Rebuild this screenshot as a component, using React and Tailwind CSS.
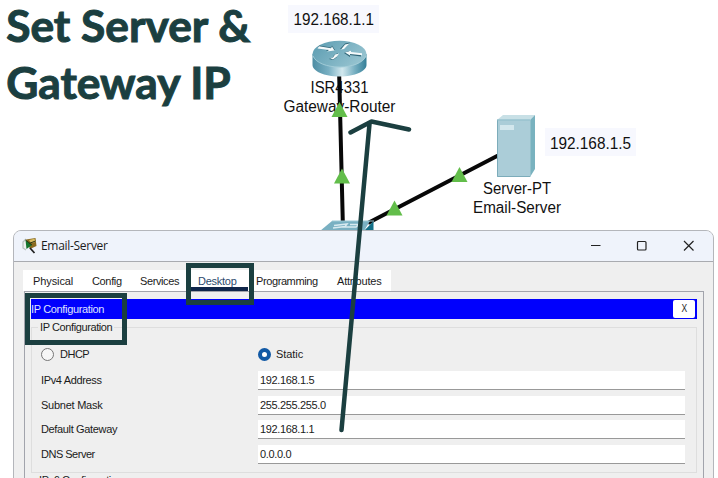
const tabs = [
  { name: 'Physical', cls: 'w-[59px] pl-[10px] tracking-[-0.1px]' },
  { name: 'Config', cls: 'w-[48px] pl-[10px] tracking-[-0.35px]' },
  { name: 'Services', cls: 'w-[58px] pl-[10px] tracking-[-0.4px]' },
  { name: 'Desktop', cls: 'w-[58px] pl-[10px] tracking-[-0.25px] text-[#2b4a6d]', active: true },
  { name: 'Programming', cls: 'w-[81px] pl-[10px] tracking-[-0.4px]' },
  { name: 'Attributes', cls: 'w-[64px] pl-[10px] tracking-[-0.2px]' },
];

const fields = [
  { label: 'IPv4 Address', labelCls: 'tracking-[-0.35px]', value: '192.168.1.5' },
  { label: 'Subnet Mask', labelCls: 'tracking-[-0.25px]', value: '255.255.255.0' },
  { label: 'Default Gateway', labelCls: 'tracking-[-0.35px]', value: '192.168.1.1' },
  { label: 'DNS Server', labelCls: 'tracking-[-0.5px]', value: '0.0.0.0' },
];

const linkLights = [
  [339.5, 102],
  [342, 168.5],
  [394.5, 200.5],
  [459.5, 167],
];

function CanvasText({ x, y, width, children }) {
  return (
    <text x={x} y={y} textLength={width} lengthAdjust="spacingAndGlyphs" fontSize="16" fill="#111">
      {children}
    </text>
  );
}

function Topology() {
  return (
    <svg className="absolute left-0 top-0 h-[230px] w-[718px] font-['Liberation_Sans',Arial,sans-serif]" viewBox="0 0 718 230">
      <defs>
        <linearGradient id="routerSide">
          <stop offset="0" stopColor="#4d8da3" />
          <stop offset="0.3" stopColor="#79b0c3" />
          <stop offset="0.55" stopColor="#d2e8ee" />
          <stop offset="0.78" stopColor="#78b0c2" />
          <stop offset="1" stopColor="#347f98" />
        </linearGradient>
        <linearGradient id="routerTop" x2="1" y2="0.5">
          <stop offset="0" stopColor="#5a9bb0" />
          <stop offset="1" stopColor="#94c2cf" />
        </linearGradient>
      </defs>
      <rect x="288" y="5" width="91" height="28" fill="#f7f8fe" />
      <CanvasText x={293.5} y={25} width={80.5}>192.168.1.1</CanvasText>
      <rect x="545" y="128" width="91" height="28" fill="#f7f8fe" />
      <CanvasText x={550} y={149} width={81}>192.168.1.5</CanvasText>

      <CanvasText x={310.5} y={93} width={58}>ISR4331</CanvasText>
      <CanvasText x={283.5} y={112} width={112}>Gateway-Router</CanvasText>
      <CanvasText x={483} y={194} width={68}>Server-PT</CanvasText>
      <CanvasText x={473} y={213} width={88}>Email-Server</CanvasText>

      <path d="M339.2 76L342.8 222M368 223L499 155" stroke="#080808" strokeWidth="4" fill="none" />

      <path d="M312.5 54V65C312.5 71 324 76.5 339.5 76.5S366.500 71 366.500 65V54Z" fill="url(#routerSide)" />
      <ellipse cx="339.500" cy="54" rx="27" ry="13.200" fill="url(#routerTop)" />
      <path d="M313 56C316 63 327 67 339.500 67S363 63 366 56" fill="none" stroke="#a9d0da" strokeWidth="0.8" />
      <g fill="#2f6577">
        <path d="M319 45.500L331 47.500L332 45.500L335 50L326 51L328 49L318 47.500Z" />
        <path d="M340 49L345 43.500L350 42.500L347 46L343 49Z" />
        <path d="M361 54.500L349 53L349 51L344 53L350 57L350 55L361 56.500Z" />
        <path d="M329 59L333 57L334 55L338 53L337 57L333 60Z" />
      </g>
      <g fill="#f5fafb">
        <path d="M319 46.200L331 48.200L332 46.500L334.500 50.500L327 51.500L329 50L317.500 48.500Z" />
        <path d="M341 49.500L345 44.500L349.500 43.500L347 46L344 49Z" />
        <path d="M362 53.200L351 52L351 50.700L345 52.500L350 55.500L350 54L362 55.200Z" />
        <path d="M330 58L333 57.500L335 54.500L339 53.500L337 56.500L333 59.500Z" />
      </g>

      <path d="M497 120L503 115H535L530 120Z" fill="#c8e0e6" />
      <path d="M530 120L535 115V169L530 177Z" fill="#79b2bf" />
      <rect x="497" y="119.500" width="33.500" height="57.500" fill="#abcdd8" />
      <path d="M497.500 120V176.500H530" fill="none" stroke="#7cacba" />
      <path d="M497 120H530" stroke="#8fbdca" />
      <rect x="500" y="125" width="14" height="5" fill="#d3e7ed" />

      <path d="M320 231L332 221H370L364 231Z" fill="#79b0c2" />
      <path d="M364 231L373.500 221V231Z" fill="#137088" />
      <path d="M332 221H374" stroke="#9dc9d5" />
      <path d="M334 225.500L347 224L345 226.500L333 228M350 224.500H359L356 227H343" fill="none" stroke="#d8eaf0" strokeWidth="1.500" />

      {linkLights.map(([x, y]) => (
        <path key={x} d={`M${x} ${y}l8 15h-16z`} fill="#62bd4a" />
      ))}
    </svg>
  );
}

function AppIcon() {
  return (
    <svg className="h-[18px] w-[18px]" viewBox="0 0 18 18">
      <path d="M5 2L2 5v6l3 2" fill="#eef0ef" stroke="#b9c2c0" strokeWidth="1.300" />
      <path d="M5 2.500L14.500 1L15.500 9L9 12Z" fill="#8a6b21" />
      <path d="M8 3L13.500 1.800L14.500 5L10 6Z" fill="#d9bd62" />
      <path d="M4.500 3L11 8L5.500 12Z" fill="#14752c" />
      <path d="M4.500 3L11 8M8 6.500L14.500 4" stroke="#2d3714" strokeWidth="1" />
      <path d="M9 11L13.500 16" stroke="#222" strokeWidth="1.800" />
    </svg>
  );
}

function TitleBar() {
  return (
    <div className="flex h-[31px] shrink-0 items-center border-b border-[#a9abb0] bg-[#eff3fb] pl-[7px] pr-[18px]">
      <AppIcon />
      <span className="ml-[2px] font-['Open_Sans','Noto_Sans',sans-serif] text-[12px] tracking-[-0.3px] text-[#1c1c1c]">Email-Server</span>
      <svg className="ml-auto h-[14px] w-[106px]" viewBox="0 0 106 14" fill="none" stroke="#222" strokeWidth="1.200">
        <path d="M2 6.500H11.500" />
        <rect x="48.500" y="2.500" width="8.500" height="8.500" rx="1" />
        <path d="M95 2L104.500 11.500M104.500 2L95 11.500" />
      </svg>
    </div>
  );
}

function Tabs() {
  return (
    <div className="flex h-[21px] w-[368px] bg-white">
      {tabs.map((t) => (
        <div key={t.name} className={`relative h-[21px] whitespace-nowrap leading-[22px] ${t.cls}`}>
          {t.name}
          {t.active && <span className="absolute bottom-0 left-[2px] h-[4px] w-[58px] bg-[#10264a]" />}
        </div>
      ))}
    </div>
  );
}

function ConfigForm() {
  return (
    <fieldset className="relative mt-[8px] h-[146px] border border-[#dedede]">
      <span className="absolute left-[6px] top-[-9px] bg-[#efefef] px-[2px] leading-[16px] tracking-[-0.4px]">IP Configuration</span>
      <div className="mt-[17px] flex h-[18px] items-center">
        <span className="ml-[9px] h-[13px] w-[13px] rounded-full border border-[#777] bg-[#f6f6f6]" />
        <span className="ml-[6px] w-[198px] tracking-[-0.5px]">DHCP</span>
        <span className="h-[13px] w-[13px] rounded-full border-[4px] border-[#1159a5] bg-white" />
        <span className="ml-[5px] tracking-[-0.05px]">Static</span>
      </div>
      <div className="mt-[8px] flex flex-col gap-[5.7px]">
        {fields.map((f) => (
          <div key={f.label} className="flex h-[19px] items-center">
            <span className={`w-[226px] pl-[9px] leading-[19px] ${f.labelCls}`}>{f.label}</span>
            <span className="h-[19px] w-[427px] border-b border-[#999] bg-white pl-[2px] leading-[19px] tracking-[-0.35px]">{f.value}</span>
          </div>
        ))}
      </div>
    </fieldset>
  );
}

function ServerWindow() {
  return (
    <section className="relative ml-[13px] flex h-[260px] w-[701px] flex-col overflow-hidden rounded-t-[8px] border border-[#b4b6bb] bg-[#efefef] font-['Liberation_Sans',Arial,sans-serif] text-[11px] text-[#1b1b1b]">
      <TitleBar />
      <div className="pl-[9px] pr-[9px] pt-[8px]">
        <Tabs />
        <div className="ml-[1px] h-[210px] border border-[#a2a4ac] pl-[6px] pr-[6px] pt-[7px]">
          <div className="flex h-[20px] items-center justify-between bg-[#0000fd] pr-[2px]">
            <span className="tracking-[-0.35px] text-[#dfe2ff]">IP Configuration</span>
            <button className="h-[18px] w-[22px] rounded-[2px] bg-white text-[10px] leading-[18px] text-[#222]">
              <span className="inline-block scale-x-[0.85]">X</span>
            </button>
          </div>
          <ConfigForm />
          <div className="mt-[1px] pl-[8px] leading-[13px] tracking-[-0.4px]">IPv6 Configuration</div>
        </div>
      </div>
    </section>
  );
}

function Annotations() {
  return (
    <svg className="absolute left-0 top-0 h-[478px] w-[718px]" viewBox="0 0 718 478" fill="none" stroke="#1b3f40" strokeWidth="5">
      <rect x="188.500" y="265.500" width="63" height="37" />
      <rect x="27.500" y="295.500" width="97" height="47" />
      <path d="M341.500 430L369.500 124M350.500 132.500L371.500 121.500L409 129.500" strokeLinecap="round" strokeLinejoin="round" strokeWidth="4.500" />
    </svg>
  );
}

export default function App() {
  return (
    <main className="relative h-[478px] w-[718px] overflow-hidden bg-white">
      <header className="relative flow-root h-[230px]">
        <Topology />
        <h1 className="relative -mt-[3px] origin-left scale-x-[1.03] whitespace-nowrap pl-[6px] font-['Lato',Carlito,Calibri,sans-serif] text-[43px] font-bold leading-[57px] text-[#1b3f40] [-webkit-text-stroke:1px_#1b3f40]">
          Set Server &amp;<br />Gateway IP
        </h1>
      </header>
      <ServerWindow />
      <Annotations />
    </main>
  );
}
